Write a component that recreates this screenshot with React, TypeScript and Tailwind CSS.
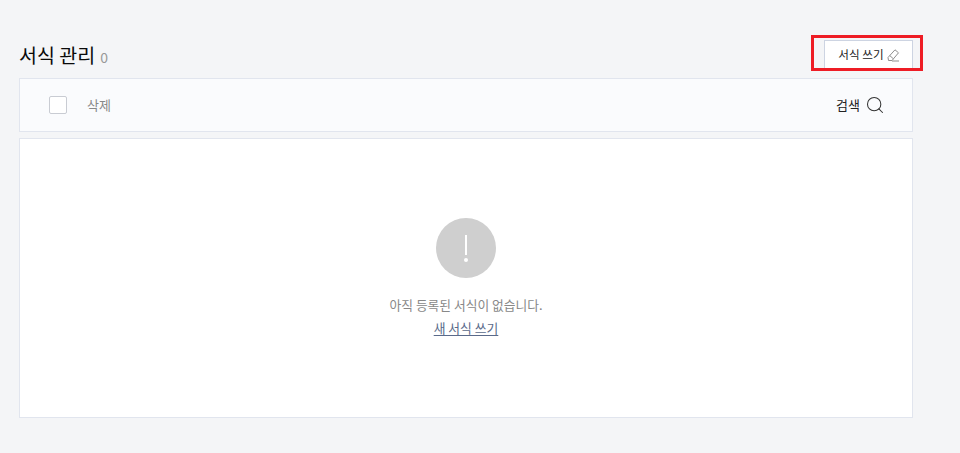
import { Search } from 'lucide-react'

function PencilIcon() {
  return (
    <svg width="13" height="13" viewBox="0 0 13 13" fill="none" stroke="#8f8f8f" strokeWidth="1" className="ml-[3px]">
      <path d="M1 8.5 8 0.8 11.5 3.8 5 11.5H1.5Z" />
      <path d="M2.8 6.6 6.4 9.8" />
      <path d="M5 12H12" />
    </svg>
  )
}

export default function App() {
  return (
    <div className="w-[960px] h-[453px] overflow-hidden bg-[#f4f5f7] pl-[19px] pr-[47px] pt-[40px] font-['Noto_Sans_CJK_KR','Noto_Sans',sans-serif]">
      <div className="flex items-start justify-between h-[38px]">
        <div className="flex items-baseline pt-[1px]">
          <h1 className="text-[19.5px] leading-[28px] text-[#0a0a0a]">서식 관리</h1>
          <span className="ml-[5px] text-[14px] text-[#999]">0</span>
        </div>
        <div className="relative">
          <button className="flex items-center justify-center w-[89px] h-[30px] pl-[1px] bg-white border border-[#cdd4e2] text-[11.6px] text-[#222]">
            서식 쓰기
            <PencilIcon />
          </button>
          <div className="absolute left-[-13px] top-[-5px] w-[112px] h-[36px] border-[3px] border-[#ee1c25] pointer-events-none" />
        </div>
      </div>

      <div className="flex items-center justify-between h-[54px] bg-[#fafbfd] border border-[#e1e5ee] pl-[29px] pr-[27px]">
        <div className="flex items-center">
          <span className="w-[18px] h-[18px] bg-white border border-[#c9ccd3] rounded-[2px]" />
          <span className="ml-[20px] text-[13px] text-[#888]">삭제</span>
        </div>
        <div className="flex items-center text-[13px] text-[#222]">
          검색
          <Search size={20} strokeWidth={1.25} className="ml-[5px] text-[#333]" />
        </div>
      </div>

      <div className="mt-[6px] h-[280px] flex flex-col items-center bg-white border border-[#e1e5ee] pt-[79px]">
        <div className="flex flex-col items-center justify-center w-[60px] h-[60px] rounded-full bg-[#cfcfcf]">
          <span className="block w-[2.5px] h-[20px] bg-white" />
          <span className="block w-[4px] h-[4px] mt-[3px] rounded-full bg-white" />
        </div>
        <p className="mt-[17px] text-[12.75px] leading-[20px] text-[#888]">아직 등록된 서식이 없습니다.</p>
        <a className="mt-[3px] text-[12.8px] leading-[20px] text-[#5a6a8a] underline underline-offset-2">새 서식 쓰기</a>
      </div>
    </div>
  )
}
